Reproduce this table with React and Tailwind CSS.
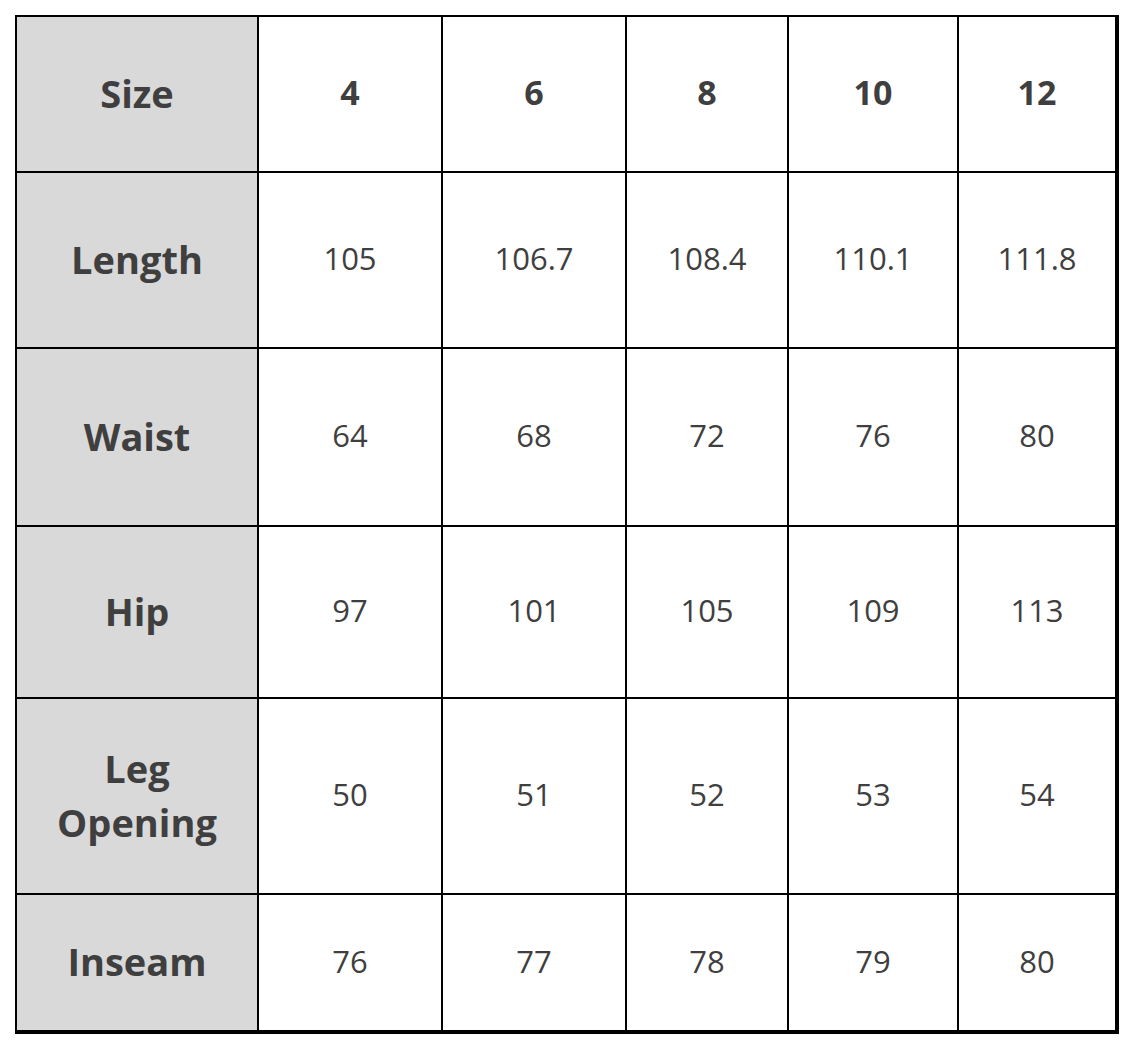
import React from 'react';

const cols = ['w-[242px]', 'w-[184px]', 'w-[184px]', 'w-[162px]', 'w-[170px]', 'w-[158px]'];

const rows = [
  { label: 'Size', height: 'h-[156px]', values: ['4', '6', '8', '10', '12'], bold: true },
  { label: 'Length', height: 'h-[176px]', values: ['105', '106.7', '108.4', '110.1', '111.8'] },
  { label: 'Waist', height: 'h-[178px]', values: ['64', '68', '72', '76', '80'] },
  { label: 'Hip', height: 'h-[172px]', values: ['97', '101', '105', '109', '113'] },
  { label: 'Leg Opening', height: 'h-[196px]', values: ['50', '51', '52', '53', '54'] },
  { label: 'Inseam', height: 'h-[137px]', values: ['76', '77', '78', '79', '80'] },
];

export default function App() {
  return (
    <div className="bg-white w-[1134px] h-[1050px] pt-[15px] pl-[15px] font-['Open_Sans','Noto_Sans',sans-serif] text-[#3f3f3f]">
      <div className="inline-flex flex-col border-2 border-black">
        {rows.map((row) => (
          <div key={row.label} className={`flex ${row.height}`}>
            <div className={`${cols[0]} flex items-center justify-center text-center px-4 pb-[3px] bg-[#d9d9d9] border-r-2 border-b-2 border-black text-[38px] font-bold leading-[54px]`}>
              {row.label}
            </div>
            {row.values.map((v, i) => (
              <div
                key={i}
                className={`${cols[i + 1]} flex items-center justify-center pb-[3px] border-r-2 border-b-2 border-black ${row.bold ? 'text-[34px] font-bold' : 'text-[31px]'}`}
              >
                {v}
              </div>
            ))}
          </div>
        ))}
      </div>
    </div>
  );
}
